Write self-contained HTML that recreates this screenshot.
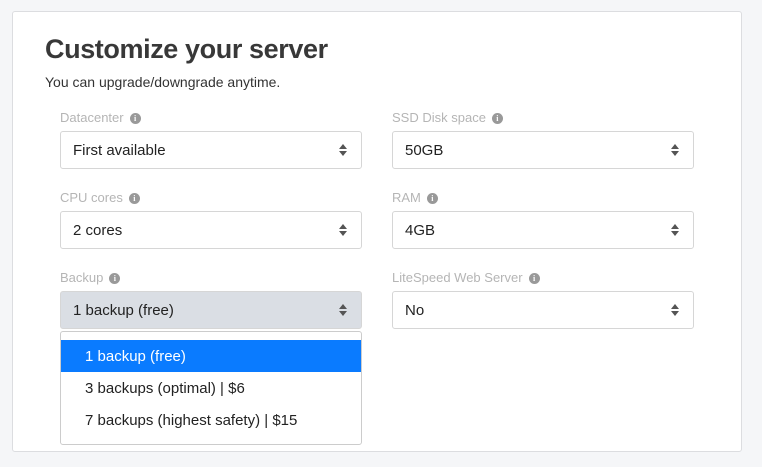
<!DOCTYPE html>
<html><head><style>
*{box-sizing:border-box}
body{margin:0;width:762px;height:467px;background:#f5f6f8;font-family:"Liberation Sans",sans-serif;position:relative;overflow:hidden}
.card{position:absolute;left:12px;top:11px;width:730px;height:441px;background:#fff;border:1px solid #dcdde0;border-radius:3px}
h1{position:absolute;left:45px;top:34px;margin:0;font-size:27px;font-weight:bold;color:#383838;letter-spacing:-0.4px}
.sub{position:absolute;left:45px;top:74px;font-size:14px;color:#333}
.lbl{position:absolute;font-size:13px;color:#b5b5b5;height:16px;line-height:16px}
.lbl i{display:inline-block;width:11px;height:11px;border-radius:50%;background:#999;color:#fff;font-size:8px;font-style:normal;font-weight:bold;text-align:center;line-height:11px;margin-left:6px;vertical-align:1px;font-family:"Liberation Serif",serif}
.sel{position:absolute;width:302px;height:38px;border:1px solid #d6d6d6;border-radius:3px;font-size:15px;color:#222;padding-left:12px;line-height:38px;background:#fff}
.sel:after{content:"";position:absolute;right:14px;top:12px;border-left:4.5px solid transparent;border-right:4.5px solid transparent;border-bottom:5px solid #555}
.sel:before{content:"";position:absolute;right:14px;top:19px;border-left:4.5px solid transparent;border-right:4.5px solid transparent;border-top:5px solid #555}
.dd{position:absolute;left:60px;top:331px;width:302px;height:114px;border:1px solid #ccc;border-radius:3px;background:#fff;padding-top:8px}
.dd div{height:32px;line-height:33px;padding-left:24px;font-size:15px;color:#222}
.dd .on{background:#0a7bff;color:#fff}
</style></head><body>
<div class="card"></div>
<h1>Customize your server</h1>
<div class="sub">You can upgrade/downgrade anytime.</div>
<div class="lbl" style="left:60px;top:110px">Datacenter<i>i</i></div>
<div class="lbl" style="left:392px;top:110px">SSD Disk space<i>i</i></div>
<div class="sel" style="left:60px;top:131px">First available</div>
<div class="sel" style="left:392px;top:131px">50GB</div>
<div class="lbl" style="left:60px;top:190px">CPU cores<i>i</i></div>
<div class="lbl" style="left:392px;top:190px">RAM<i>i</i></div>
<div class="sel" style="left:60px;top:211px">2 cores</div>
<div class="sel" style="left:392px;top:211px">4GB</div>
<div class="lbl" style="left:60px;top:270px">Backup<i>i</i></div>
<div class="lbl" style="left:392px;top:270px">LiteSpeed Web Server<i>i</i></div>
<div class="sel" style="left:60px;top:291px;background:#dadee4">1 backup (free)</div>
<div class="sel" style="left:392px;top:291px">No</div>
<div class="dd"><div class="on">1 backup (free)</div><div>3 backups (optimal) | $6</div><div>7 backups (highest safety) | $15</div></div>
</body></html>
